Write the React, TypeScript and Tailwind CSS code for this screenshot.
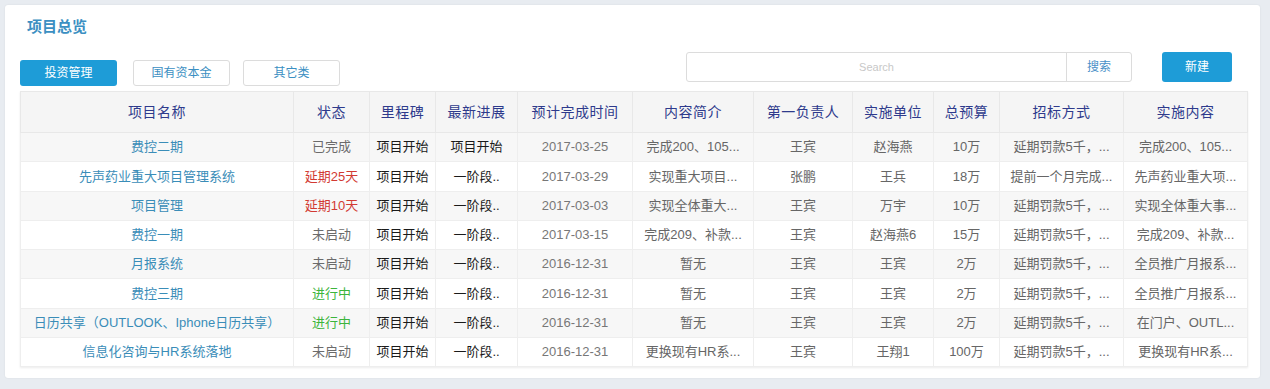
const rows = [
  { name: "费控二期", status: "已完成", tone: "gray", stone: "项目开始", progress: "项目开始", date: "2017-03-25", intro: "完成200、105...", owner: "王宾", unit: "赵海燕", budget: "10万", bid: "延期罚款5千，...", content: "完成200、105..." },
  { name: "先声药业重大项目管理系统", status: "延期25天", tone: "red", stone: "项目开始", progress: "一阶段..", date: "2017-03-29", intro: "实现重大项目...", owner: "张鹏", unit: "王兵", budget: "18万", bid: "提前一个月完成...", content: "先声药业重大项..." },
  { name: "项目管理", status: "延期10天", tone: "red", stone: "项目开始", progress: "一阶段..", date: "2017-03-03", intro: "实现全体重大...", owner: "王宾", unit: "万宇", budget: "10万", bid: "延期罚款5千，...", content: "实现全体重大事..." },
  { name: "费控一期", status: "未启动", tone: "gray", stone: "项目开始", progress: "一阶段..", date: "2017-03-15", intro: "完成209、补款...", owner: "王宾", unit: "赵海燕6", budget: "15万", bid: "延期罚款5千，...", content: "完成209、补款..." },
  { name: "月报系统", status: "未启动", tone: "gray", stone: "项目开始", progress: "一阶段..", date: "2016-12-31", intro: "暂无", owner: "王宾", unit: "王宾", budget: "2万", bid: "延期罚款5千，...", content: "全员推广月报系..." },
  { name: "费控三期", status: "进行中", tone: "green", stone: "项目开始", progress: "一阶段..", date: "2016-12-31", intro: "暂无", owner: "王宾", unit: "王宾", budget: "2万", bid: "延期罚款5千，...", content: "全员推广月报系..." },
  { name: "日历共享（OUTLOOK、Iphone日历共享）", status: "进行中", tone: "green", stone: "项目开始", progress: "一阶段..", date: "2016-12-31", intro: "暂无", owner: "王宾", unit: "王宾", budget: "2万", bid: "延期罚款5千，...", content: "在门户、OUTL..." },
  { name: "信息化咨询与HR系统落地", status: "未启动", tone: "gray", stone: "项目开始", progress: "一阶段..", date: "2016-12-31", intro: "更换现有HR系...", owner: "王宾", unit: "王翔1", budget: "100万", bid: "延期罚款5千，...", content: "更换现有HR系..." },
];

const headers = ["项目名称", "状态", "里程碑", "最新进展", "预计完成时间", "内容简介", "第一负责人", "实施单位", "总预算", "招标方式", "实施内容"];
const widths = [273, 76, 66, 82, 115, 121, 99, 81, 66, 124, 124];

const toneClass: Record<string, string> = {
  gray: "text-[#6b6b6b]",
  red: "text-[#d23a33]",
  green: "text-[#3cb53c]",
};

export default function App() {
  return (
    <div className="w-[1270px] h-[389px] bg-[#e8ecf1] pt-[5px] pl-[5px] font-['Liberation_Sans','Noto_Sans_CJK_SC',sans-serif]">
      <div className="w-[1255px] h-[373px] bg-white rounded-[3px] shadow-[0_0_2px_rgba(0,0,0,0.08)] px-[15px] pt-[12px]">
        <h1 className="pl-[7px] text-[15px] font-bold text-[#3b8fc2] leading-[20px]">项目总览</h1>

        <div className="mt-[15px] flex h-[34px] justify-between">
          <div className="flex self-end">
            <button className="w-[97px] h-[26px] rounded-[3px] bg-[#1e9cd7] text-white text-[12px]">投资管理</button>
            <button className="ml-[16px] w-[97px] h-[26px] rounded-[3px] border border-[#dcdcdc] text-[#3b8fc2] text-[12px]">国有资本金</button>
            <button className="ml-[13px] w-[97px] h-[26px] rounded-[3px] border border-[#dcdcdc] text-[#3b8fc2] text-[12px]">其它类</button>
          </div>
          <div className="flex gap-[30px] self-start pr-[13px]">
            <div className="flex w-[446px] h-[30px] rounded-[3px] border border-[#dcdcdc]">
              <input
                placeholder="Search"
                className="flex-1 min-w-0 text-center text-[11px] outline-none placeholder:text-[#c8c8c8] bg-transparent"
              />
              <button className="w-[65px] border-l border-[#dcdcdc] text-[12px] text-[#4a90c8]">搜索</button>
            </div>
            <button className="w-[70px] h-[30px] rounded-[3px] bg-[#1e9cd7] text-white text-[12px]">新建</button>
          </div>
        </div>

        <table className="mt-[5px] table-fixed border-collapse w-[1227px] text-center shadow-[0_1px_2px_rgba(0,0,0,0.08)]">
          <colgroup>
            {widths.map((w, i) => (
              <col key={i} style={{ width: w }} />
            ))}
          </colgroup>
          <thead>
            <tr className="h-[41px] bg-[#f5f5f5]">
              {headers.map((h) => (
                <th key={h} className="border border-[#e8e8e8] font-normal text-[14px] tracking-[0.5px] text-[#2e3a8c]">
                  {h}
                </th>
              ))}
            </tr>
          </thead>
          <tbody className="text-[13px]">
            {rows.map((r, i) => (
              <tr key={i} className={`h-[29.25px] ${i % 2 === 0 ? "bg-[#f7f7f7]" : "bg-white"}`}>
                <td className="border border-[#eeeeee] text-[#3a8db8] whitespace-nowrap">{r.name}</td>
                <td className={`border border-[#eeeeee] ${toneClass[r.tone]}`}>{r.status}</td>
                <td className="border border-[#eeeeee] text-[#1a1a1a]">{r.stone}</td>
                <td className="border border-[#eeeeee] text-[#1a1a1a]">{r.progress}</td>
                <td className="border border-[#eeeeee] text-[#777]">{r.date}</td>
                <td className="border border-[#eeeeee] text-[#666] whitespace-nowrap">{r.intro}</td>
                <td className="border border-[#eeeeee] text-[#666]">{r.owner}</td>
                <td className="border border-[#eeeeee] text-[#666]">{r.unit}</td>
                <td className="border border-[#eeeeee] text-[#666]">{r.budget}</td>
                <td className="border border-[#eeeeee] text-[#666] whitespace-nowrap">{r.bid}</td>
                <td className="border border-[#eeeeee] text-[#666] whitespace-nowrap">{r.content}</td>
              </tr>
            ))}
          </tbody>
        </table>
      </div>
    </div>
  );
}
